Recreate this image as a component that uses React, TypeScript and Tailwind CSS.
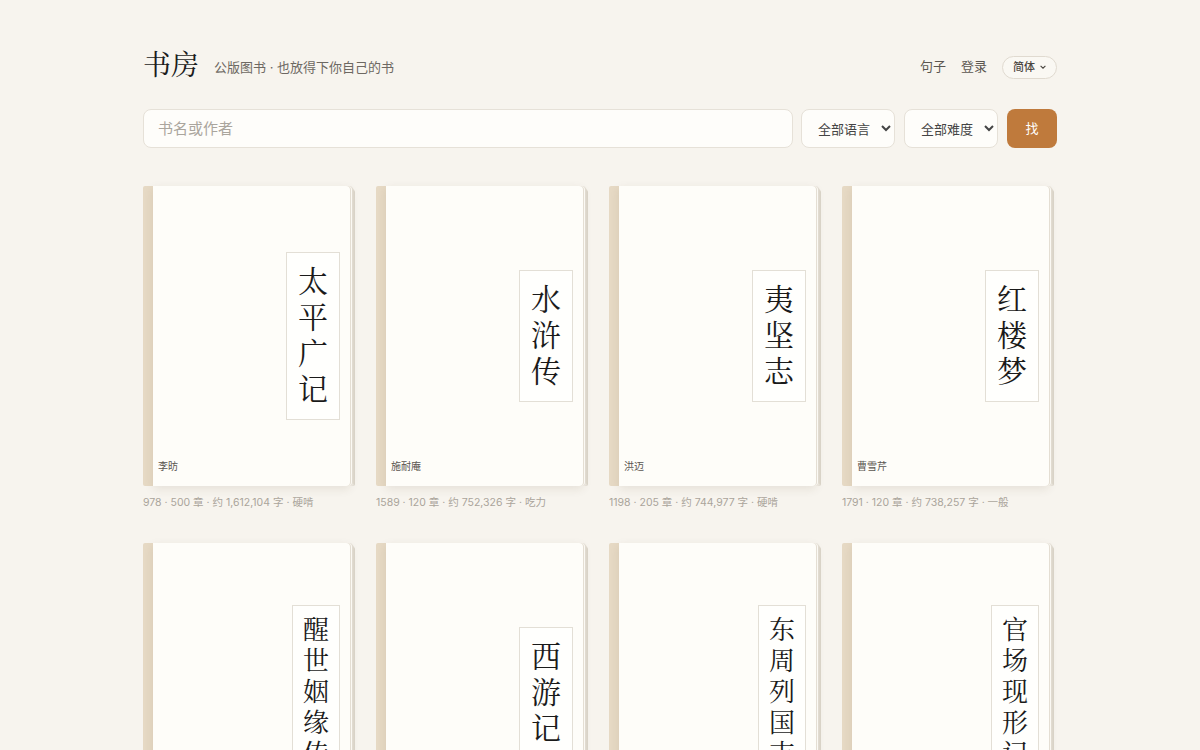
import React from "react";

type Book = { title: string; author: string; meta: string };

const BOOKS: Book[] = [
  { title: "太平广记", author: "李昉", meta: "978 · 500 章 · 约 1,612,104 字 · 硬啃" },
  { title: "水浒传", author: "施耐庵", meta: "1589 · 120 章 · 约 752,326 字 · 吃力" },
  { title: "夷坚志", author: "洪迈", meta: "1198 · 205 章 · 约 744,977 字 · 硬啃" },
  { title: "红楼梦", author: "曹雪芹", meta: "1791 · 120 章 · 约 738,257 字 · 一般" },
  { title: "醒世姻缘传", author: "西周生", meta: "1661 · 100 章 · 约 712,004 字 · 吃力" },
  { title: "西游记", author: "吴承恩", meta: "1592 · 100 章 · 约 690,812 字 · 一般" },
  { title: "东周列国志", author: "冯梦龙", meta: "1736 · 108 章 · 约 655,430 字 · 吃力" },
  { title: "官场现形记", author: "李宝嘉", meta: "1903 · 60 章 · 约 640,118 字 · 一般" },
];

const SANS = "font-['Inter','Noto_Sans_CJK_SC',sans-serif]";
const SERIF = "font-['Liberation_Serif','Noto_Serif_CJK_SC','Noto_Sans_CJK_SC',serif]";

function BookCard({ book }: { book: Book }) {
  const long = book.title.length > 4;
  return (
    <div>
      <div className="flex h-[300px] w-[215px]">
        {/* 书脊 */}
        <div className="w-[10px] flex-none rounded-l-[2px] bg-[#e6d9c4]" />
        {/* 封面 + 书页 */}
        <div className="grid w-[197px] grid-rows-[1fr_auto_1fr] rounded-r-[4px] bg-[#fefdf9] shadow-[1px_0_0_#e4ded3,2px_0_0_#fbf9f4,3px_0_0_#e1dbd0,4px_1px_0_-1px_#f8f5ef,5px_1px_0_-1px_#dcd6cb,6px_2px_0_-2px_#f6f3ec,7px_2px_0_-2px_#d9d3c7,0_3px_10px_rgba(80,60,30,0.10)]">
          <div />
          <div className="flex justify-end pr-[10px]">
            <div
              className={`flex flex-col items-center border border-[#e3dfd6] bg-[#fffffd] text-[#1a1a1a] ${SERIF} ${
                long ? "px-[10px] py-[9px] text-[26px] leading-[31px]" : "px-[11px] py-[11px] text-[30px] leading-[36px]"
              }`}
            >
              {book.title.split("").map((ch, i) => (
                <span key={i}>{ch}</span>
              ))}
            </div>
          </div>
          <div className="flex items-end pb-[12px] pl-[5px] text-[10px] text-[#5a5550]">{book.author}</div>
        </div>
      </div>
      <div className="mt-[9px] text-[10.5px] text-[#aaa49b]">{book.meta}</div>
    </div>
  );
}

export default function App() {
  return (
    <div className={`min-h-screen bg-[#f7f4ee] ${SANS}`}>
      <div className="mx-auto w-[914px] pt-[46px]">
        <header className="flex h-[40px] items-center justify-between">
          <div className="flex items-center gap-[15px]">
            <h1 className={`text-[28px] leading-[40px] text-[#1c1c1c] ${SERIF}`}>书房</h1>
            <span className="pt-[3px] text-[13px] text-[#6d6862]">公版图书 · 也放得下你自己的书</span>
          </div>
          <nav className="flex items-center pt-[2px] text-[13px] text-[#5b5650]">
            <a className="mr-[15px]">句子</a>
            <a className="mr-[15px]">登录</a>
            <button
              type="button"
              className="flex h-[23px] items-center gap-[4px] rounded-full border border-[#e0dad0] bg-[#faf8f3] pl-[10px] pr-[9px] text-[11px] font-medium text-[#4a4540]"
            >
              简体
              <svg width="8" height="8" viewBox="0 0 10 10" fill="none" stroke="currentColor" strokeWidth="1.4">
                <path d="M2 3.5l3 3 3-3" />
              </svg>
            </button>
          </nav>
        </header>

        <div className="mt-[23px] flex">
          <input
            placeholder="书名或作者"
            className="h-[39px] min-w-0 flex-1 rounded-[8px] border border-[#e6e1d8] bg-[#fefdfa] px-[14px] text-[15px] text-[#333] outline-none placeholder:text-[#aaa59d]"
          />
          <select className="ml-[8px] h-[39px] w-[94px] rounded-[8px] border border-[#e6e1d8] bg-[#fefdfa] pl-[12px] text-[13px] text-[#444]">
            <option>全部语言</option>
          </select>
          <select className="ml-[9px] h-[39px] w-[94px] rounded-[8px] border border-[#e6e1d8] bg-[#fefdfa] pl-[12px] text-[13px] text-[#444]">
            <option>全部难度</option>
          </select>
          <button type="button" className="ml-[9px] h-[39px] w-[50px] rounded-[8px] bg-[#bf7a3c] text-[13px] text-white">
            找
          </button>
        </div>

        <div className="mt-[38px] grid grid-cols-4 gap-x-[18px] gap-y-[32px]">
          {BOOKS.map((b) => (
            <BookCard key={b.title} book={b} />
          ))}
        </div>
      </div>
    </div>
  );
}
